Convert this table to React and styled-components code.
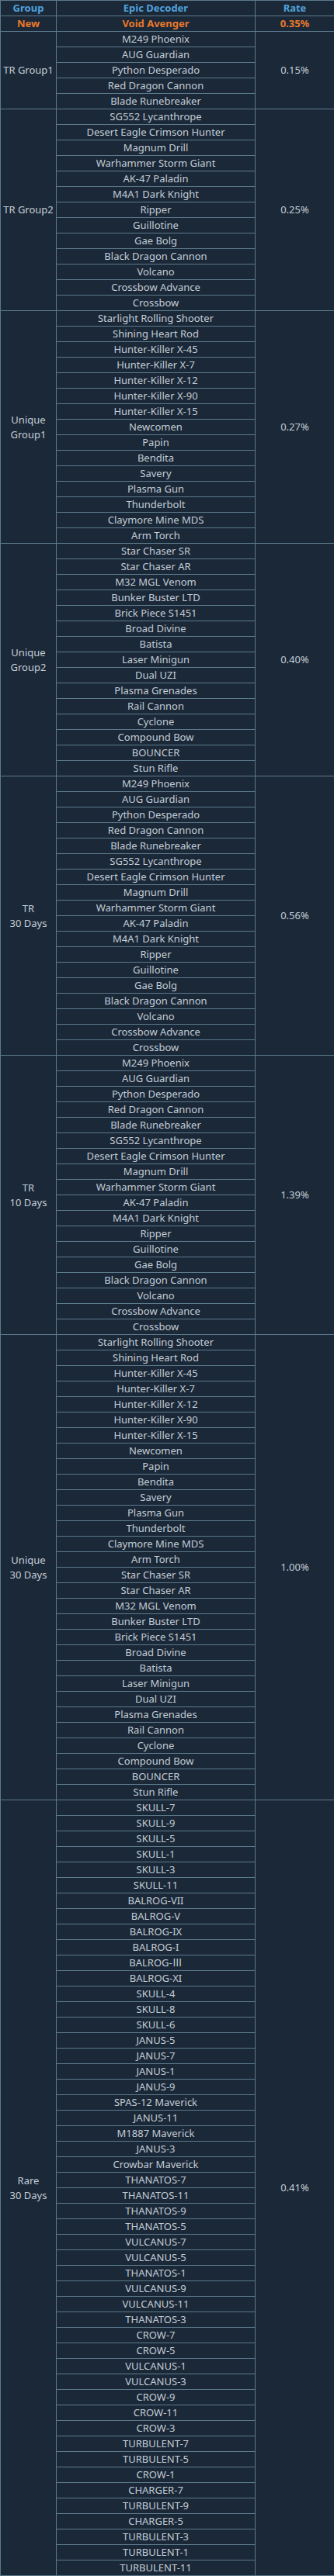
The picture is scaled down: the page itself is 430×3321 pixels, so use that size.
import React from "react";
import styled, { createGlobalStyle } from "styled-components";

const Global = createGlobalStyle`
  html, body { margin: 0; padding: 0; background: #1b2838; }
  body { font-family: "Noto Sans", "Noto Sans CJK KR", sans-serif; }
`;

const Table = styled.table`
  width: 430px;
  border-collapse: collapse;
  table-layout: fixed;
  background: #1b2838;
  color: #c3cdd6;
  font-size: 13px;
`;

const Col = styled.col`
  width: ${(p) => p.$w}px;
`;

const Cell = styled.td`
  border: 1px solid #5b7a8c;
  height: 19px;
  padding: 0;
  line-height: 19px;
  text-align: center;
  vertical-align: middle;
  white-space: nowrap;
  overflow: hidden;
  color: ${(p) => (p.$accent ? "#e8792b" : "#c3cdd6")};
  font-weight: ${(p) => (p.$accent ? 700 : 400)};
`;

const HeadCell = styled.th`
  border: 1px solid #5b7a8c;
  height: 19px;
  padding: 0;
  line-height: 19px;
  text-align: center;
  color: #4fa3dc;
  font-weight: 700;
`;

const trGroup1 = ["M249 Phoenix", "AUG Guardian", "Python Desperado", "Red Dragon Cannon", "Blade Runebreaker"];
const trGroup2 = [
  "SG552 Lycanthrope", "Desert Eagle Crimson Hunter", "Magnum Drill", "Warhammer Storm Giant",
  "AK-47 Paladin", "M4A1 Dark Knight", "Ripper", "Guillotine", "Gae Bolg", "Black Dragon Cannon",
  "Volcano", "Crossbow Advance", "Crossbow",
];
const unique1 = [
  "Starlight Rolling Shooter", "Shining Heart Rod", "Hunter-Killer X-45", "Hunter-Killer X-7",
  "Hunter-Killer X-12", "Hunter-Killer X-90", "Hunter-Killer X-15", "Newcomen", "Papin", "Bendita",
  "Savery", "Plasma Gun", "Thunderbolt", "Claymore Mine MDS", "Arm Torch",
];
const unique2 = [
  "Star Chaser SR", "Star Chaser AR", "M32 MGL Venom", "Bunker Buster LTD", "Brick Piece S1451",
  "Broad Divine", "Batista", "Laser Minigun", "Dual UZI", "Plasma Grenades", "Rail Cannon",
  "Cyclone", "Compound Bow", "BOUNCER", "Stun Rifle",
];
const rare = [
  "SKULL-7", "SKULL-9", "SKULL-5", "SKULL-1", "SKULL-3", "SKULL-11",
  "BALROG-VII", "BALROG-V", "BALROG-IX", "BALROG-I", "BALROG-Ⅲ", "BALROG-XI",
  "SKULL-4", "SKULL-8", "SKULL-6", "JANUS-5", "JANUS-7", "JANUS-1", "JANUS-9",
  "SPAS-12 Maverick", "JANUS-11", "M1887 Maverick", "JANUS-3", "Crowbar Maverick",
  "THANATOS-7", "THANATOS-11", "THANATOS-9", "THANATOS-5", "VULCANUS-7", "VULCANUS-5",
  "THANATOS-1", "VULCANUS-9", "VULCANUS-11", "THANATOS-3", "CROW-7", "CROW-5",
  "VULCANUS-1", "VULCANUS-3", "CROW-9", "CROW-11", "CROW-3", "TURBULENT-7", "TURBULENT-5",
  "CROW-1", "CHARGER-7", "TURBULENT-9", "CHARGER-5", "TURBULENT-3", "TURBULENT-1", "TURBULENT-11",
];

const groups = [
  { label: ["TR Group1"], rate: "0.15%", items: trGroup1 },
  { label: ["TR Group2"], rate: "0.25%", items: trGroup2 },
  { label: ["Unique", "Group1"], rate: "0.27%", items: unique1 },
  { label: ["Unique", "Group2"], rate: "0.40%", items: unique2 },
  { label: ["TR", "30 Days"], rate: "0.56%", items: [...trGroup1, ...trGroup2] },
  { label: ["TR", "10 Days"], rate: "1.39%", items: [...trGroup1, ...trGroup2] },
  { label: ["Unique", "30 Days"], rate: "1.00%", items: [...unique1, ...unique2] },
  { label: ["Rare", "30 Days"], rate: "0.41%", items: rare },
];

function Label({ lines }) {
  return lines.map((l, i) => (
    <React.Fragment key={i}>
      {i > 0 && <br />}
      {l}
    </React.Fragment>
  ));
}

export default function App() {
  return (
    <>
      <Global />
      <Table>
        <colgroup>
          <Col $w={72} />
          <Col $w={256} />
          <Col $w={102} />
        </colgroup>
        <thead>
          <tr>
            <HeadCell>Group</HeadCell>
            <HeadCell>Epic Decoder</HeadCell>
            <HeadCell>Rate</HeadCell>
          </tr>
        </thead>
        <tbody>
          <tr>
            <Cell $accent>New</Cell>
            <Cell $accent>Void Avenger</Cell>
            <Cell $accent>0.35%</Cell>
          </tr>
          {groups.map((g, gi) =>
            g.items.map((item, i) => (
              <tr key={`${gi}-${i}`}>
                {i === 0 && (
                  <Cell rowSpan={g.items.length}>
                    <Label lines={g.label} />
                  </Cell>
                )}
                <Cell>{item}</Cell>
                {i === 0 && <Cell rowSpan={g.items.length}>{g.rate}</Cell>}
              </tr>
            ))
          )}
        </tbody>
      </Table>
    </>
  );
}
